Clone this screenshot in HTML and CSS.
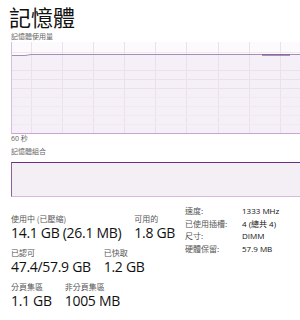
FILE: index.html
```html
<!DOCTYPE html>
<html>
<head>
<meta charset="utf-8">
<link rel="stylesheet" href="styles.css">
</head>
<body>
<div class="page">
  <h1 class="title">記憶體</h1>
  <div class="cap">記憶體使用量</div>
  <div class="graph1">
    <svg width="288" height="91" viewBox="0 0 288 91">
      <rect x="0" y="0" width="288" height="91" fill="#fdfafd"/>
      <path d="M0 13.5 L13 13.5 L19 12.5 L288 12.5 L288 91 L0 91 Z" fill="#f5eff7"/>
      <g stroke="#ebe1ed" stroke-width="1">
        <line x1="19.5" y1="0" x2="19.5" y2="91"/>
        <line x1="50.5" y1="0" x2="50.5" y2="91"/>
        <line x1="81.5" y1="0" x2="81.5" y2="91"/>
        <line x1="112.5" y1="0" x2="112.5" y2="91"/>
        <line x1="143.5" y1="0" x2="143.5" y2="91"/>
        <line x1="174.5" y1="0" x2="174.5" y2="91"/>
        <line x1="206.5" y1="0" x2="206.5" y2="91"/>
        <line x1="237.5" y1="0" x2="237.5" y2="91"/>
        <line x1="268.5" y1="0" x2="268.5" y2="91"/>
        <line x1="0" y1="28.5" x2="288" y2="28.5"/>
        <line x1="0" y1="37.5" x2="288" y2="37.5"/>
        <line x1="0" y1="46.5" x2="288" y2="46.5"/>
      </g>
      <g stroke="#f0e9f2" stroke-width="1">
        <line x1="0" y1="55.5" x2="288" y2="55.5"/>
        <line x1="0" y1="64.5" x2="288" y2="64.5"/>
        <line x1="0" y1="73.5" x2="288" y2="73.5"/>
        <line x1="0" y1="82.5" x2="288" y2="82.5"/>
      </g>
      <line x1="0" y1="10.5" x2="288" y2="10.5" stroke="#efe7f1" stroke-width="1"/>
      <path d="M0 13.5 L13 13.5 L19 12.5 L288 12.5" fill="none" stroke="#a88cb3" stroke-width="1"/>
      <path d="M250 13 L278 13" stroke="#7a4f88" stroke-width="1.2"/>
    </svg>
  </div>
  <div class="cap time">60 秒</div>
  <div class="cap cap2">記憶體組合</div>
  <div class="graph2"></div>

  <div class="stats">
    <div class="left">
      <div class="row">
        <div class="col"><div class="lbl">使用中 (已壓縮)</div><div class="val">14.1 GB (26.1 MB)</div></div>
        <div class="col"><div class="lbl">可用的</div><div class="val">1.8 GB</div></div>
      </div>
      <div class="row">
        <div class="col"><div class="lbl">已認可</div><div class="val">47.4/57.9 GB</div></div>
        <div class="col"><div class="lbl">已快取</div><div class="val">1.2 GB</div></div>
      </div>
      <div class="row">
        <div class="col"><div class="lbl">分頁集區</div><div class="val">1.1 GB</div></div>
        <div class="col"><div class="lbl">非分頁集區</div><div class="val">1005 MB</div></div>
      </div>
    </div>
    <div class="right">
      <div class="kv"><span class="k">速度:</span><span class="v">1333 MHz</span></div>
      <div class="kv"><span class="k">已使用插槽:</span><span class="v">4 (總共 4)</span></div>
      <div class="kv"><span class="k">尺寸:</span><span class="v">DIMM</span></div>
      <div class="kv"><span class="k">硬體保留:</span><span class="v">57.9 MB</span></div>
    </div>
  </div>
</div>
</body>
</html>
```

FILE: styles.css
```css
html, body {
  margin: 0;
  padding: 0;
  background: #ffffff;
  overflow: hidden;
}
body {
  font-family: "Open Sans", "Noto Sans CJK TC", sans-serif;
  color: #111;
  width: 300px;
  height: 320px;
}
.page {
  padding: 2px 0 0 11px;
}
.title {
  margin: 0 0 0 -2px;
  height: 29px;
  font-family: "Noto Sans CJK TC", sans-serif;
  font-weight: 400;
  font-size: 22px;
  line-height: 29px;
  color: #111;
}
.cap {
  font-family: "Noto Sans CJK TC", sans-serif;
  font-size: 7px;
  line-height: 10px;
  color: #666;
  height: 10px;
  white-space: nowrap;
}
.cap.time {
  margin-top: 0;
  font-family: "Open Sans", "Noto Sans CJK TC", sans-serif;
}
.cap.cap2 {
  margin-top: 2px;
}
.graph1 {
  margin-top: 1px;
  height: 91px;
  border-left: 1px solid #d5bfdc;
  border-bottom: 1px solid #c9a5d2;
  overflow: hidden;
}
.graph1 svg {
  display: block;
}
.graph2 {
  margin-top: 6px;
  height: 33px;
  background: #f3eff5;
  border-top: 1.5px solid #6b2e80;
  border-left: 1px solid #8d5f9c;
  border-bottom: 1px solid #d7b9dd;
}
.stats {
  display: flex;
  margin-top: 8px;
}
.left {
  width: 174px;
  display: flex;
  flex-direction: column;
  gap: 6px;
  padding-top: 9px;
}
.row {
  display: flex;
  gap: 13px;
}
.col {
  display: flex;
  flex-direction: column;
}
.lbl {
  font-family: "Noto Sans CJK TC", sans-serif;
  font-size: 8px;
  line-height: 10px;
  color: #555;
  height: 10px;
  white-space: nowrap;
}
.val {
  font-family: "Open Sans", sans-serif;
  font-size: 14px;
  letter-spacing: -0.3px;
  line-height: 18px;
  color: #111;
  white-space: nowrap;
}
.right {
  display: flex;
  flex-direction: column;
}
.kv {
  display: flex;
  height: 12.6px;
  line-height: 12.6px;
  font-size: 8px;
  white-space: nowrap;
}
.k {
  width: 57px;
  color: #555;
  font-family: "Noto Sans CJK TC", sans-serif;
}
.v {
  color: #111;
  font-family: "Open Sans", "Noto Sans CJK TC", sans-serif;
}
```
